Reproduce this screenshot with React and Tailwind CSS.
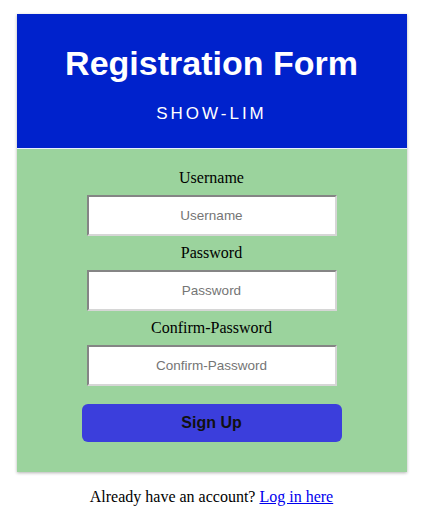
import React from 'react';

function Field({ label, type = 'text' }) {
  return (
    <div className="flex flex-col items-center">
      <label className="text-[16px] leading-[18px] text-black">{label}</label>
      <input
        type={type}
        placeholder={label}
        className="mt-2 mb-2 w-[250px] h-[41px] bg-white text-center text-[13.5px] text-black placeholder:text-[#757575] border-2 border-t-[#858585] border-l-[#858585] border-b-[#d6d6d6] border-r-[#d6d6d6] outline-none font-['Liberation_Sans',Arial,sans-serif]"
      />
    </div>
  );
}

export default function App() {
  return (
    <div className="min-h-[523px] bg-white pt-[14px] font-['Liberation_Serif','Times_New_Roman',serif]">
      <div className="mx-auto w-[390px] shadow-[0_1px_3px_rgba(0,0,0,0.3)]">
        <div className="h-[134px] bg-[#0022cc] flex flex-col items-center text-white font-['Liberation_Sans',Arial,sans-serif]">
          <h1 className="mt-[30px] text-[34px] leading-[38px] font-bold">Registration Form</h1>
          <p className="mt-[22px] text-[17px] leading-[20px] tracking-[3px]">SHOW-LIM</p>
        </div>
        <div className="h-px bg-[#e8f0ff]"></div>
        <div className="bg-[#9bd39d] pt-[20px] pb-[30px] flex flex-col items-center">
          <Field label="Username" />
          <Field label="Password" type="password" />
          <Field label="Confirm-Password" type="password" />
          <button className="mt-[10px] w-[260px] h-[38px] rounded-[6px] bg-[#3b3edc] text-[#111] text-[16px] font-bold font-['Liberation_Sans',Arial,sans-serif]">
            Sign Up
          </button>
        </div>
      </div>
      <p className="mt-[13px] text-center text-[16px] text-black">
        Already have an account?{' '}
        <a href="#" className="text-[#0000ee] underline">Log in here</a>
      </p>
    </div>
  );
}
